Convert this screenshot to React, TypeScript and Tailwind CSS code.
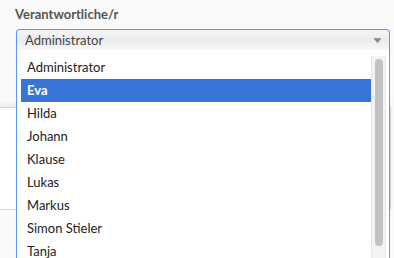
import React from "react";

const names = ["Administrator", "Eva", "Hilda", "Johann", "Klause", "Lukas", "Markus", "Simon Stieler", "Tanja"];

export default function App() {
  return (
    <div
      className="relative w-[394px] h-[258px] overflow-hidden bg-[#f9f9f9]"
      style={{ fontFamily: "Lato, 'Liberation Sans', sans-serif" }}
    >
      <div className="pl-[15px] pt-[6px] h-[29px] text-[13px] leading-[16px] font-bold text-[#555]">
        Verantwortliche/r
      </div>
      <div className="relative ml-[16px] w-[374px]">
        <div className="h-[21px] flex items-center justify-between pl-[8px] pr-[8px] border border-b-0 border-[#5897fb] rounded-t-[4px] bg-gradient-to-b from-[#f6f6f6] via-[#ebebeb] to-[#f8f8f8] text-[13px] text-[#444]">
          <span className="leading-[15px]">Administrator</span>
          <svg width="7" height="6" viewBox="0 0 7 6" className="mt-[1px]">
            <rect x="0" y="0" width="7" height="1" fill="#999" />
            <polygon points="0,1 7,1 3.5,5" fill="#888" />
          </svg>
        </div>
        <div className="absolute left-0 top-full z-10 w-[374px] h-[260px] bg-white border-x border-[#5897fb] pt-[6px] pl-[4px] pr-[3px] flex">
          <ul className="flex-1 text-[13px] text-[#222]">
            {names.map((n, i) => (
              <li
                key={n}
                className={
                  i === 1
                    ? "h-[23px] flex items-center px-[6px] bg-[#3875d7] text-white font-bold"
                    : "h-[23px] flex items-center px-[6px]"
                }
              >
                {n}
              </li>
            ))}
          </ul>
          <div className="w-[15px] h-[204px] bg-[#f3f3f3] border-x border-[#e6e6e6] flex justify-center pt-[3px]">
            <div className="w-[8px] h-[187px] rounded-full bg-[#c2c2c2]" />
          </div>
        </div>
      </div>
      <div className="mt-[57px] w-[391px] h-[103px] bg-white border-t border-b border-r border-[#d4d4d4] shadow-[0_-3px_4px_rgba(0,0,0,0.06)]" />
    </div>
  );
}
